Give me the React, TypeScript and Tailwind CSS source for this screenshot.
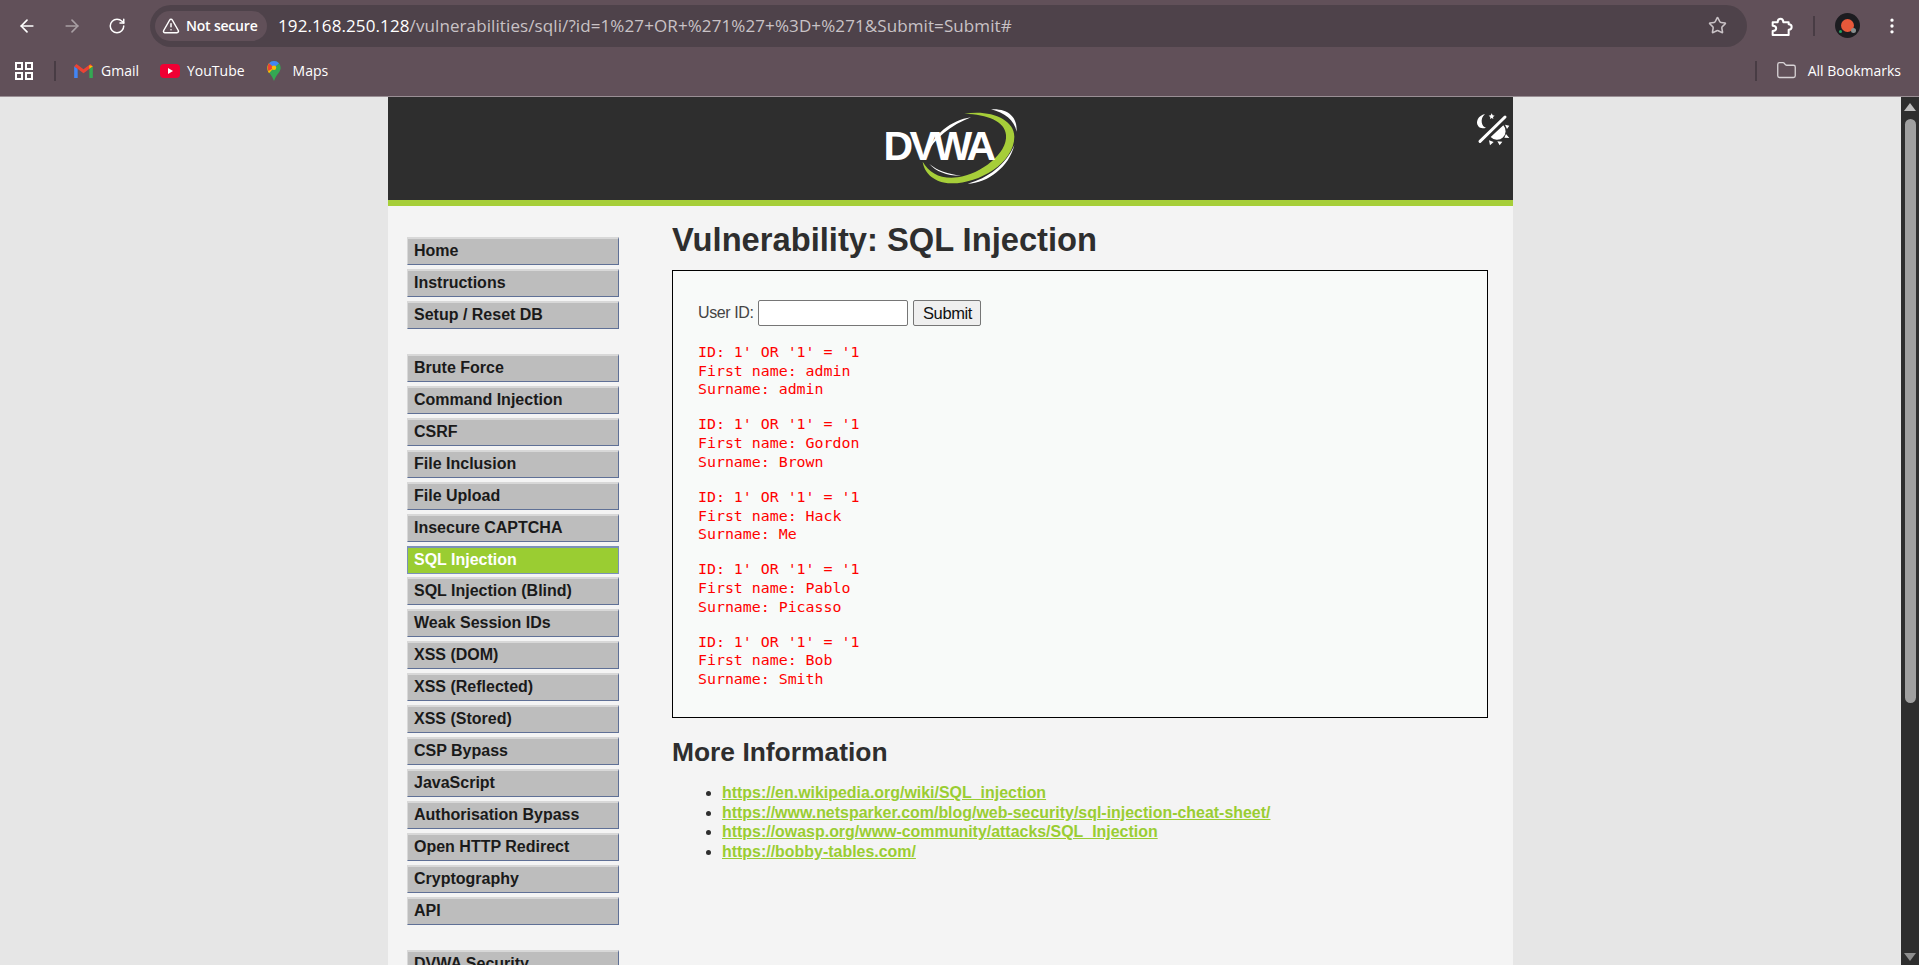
import { ArrowLeft, ArrowRight, RotateCw, TriangleAlert, Star, EllipsisVertical, Folder } from "lucide-react";

const menuGroups = [
  ["Home", "Instructions", "Setup / Reset DB"],
  ["Brute Force", "Command Injection", "CSRF", "File Inclusion", "File Upload", "Insecure CAPTCHA", "SQL Injection", "SQL Injection (Blind)", "Weak Session IDs", "XSS (DOM)", "XSS (Reflected)", "XSS (Stored)", "CSP Bypass", "JavaScript", "Authorisation Bypass", "Open HTTP Redirect", "Cryptography", "API"],
  ["DVWA Security"],
];

const results = [
  ["admin", "admin"],
  ["Gordon", "Brown"],
  ["Hack", "Me"],
  ["Pablo", "Picasso"],
  ["Bob", "Smith"],
];

const links = [
  "https://en.wikipedia.org/wiki/SQL_injection",
  "https://www.netsparker.com/blog/web-security/sql-injection-cheat-sheet/",
  "https://owasp.org/www-community/attacks/SQL_Injection",
  "https://bobby-tables.com/",
];

function Browser() {
  return (
    <div className="h-[97px] shrink-0 bg-[#615059] border-b border-[#9a8f95] font-['Open_Sans',sans-serif]">
      <div className="h-[51px] flex items-center">
        <ArrowLeft size={20} strokeWidth={2} className="ml-[17px] text-white" />
        <ArrowRight size={20} strokeWidth={2} className="ml-[25px] text-[#a89ea3]" />
        <RotateCw size={18} strokeWidth={2} className="ml-[26px] text-white" />
        <div className="ml-[24px] w-[1597px] h-[42px] rounded-full bg-[#4e424a] flex items-center pl-[5px] pr-[20px]">
          <div className="h-[30px] w-[112px] shrink-0 pl-[7px] rounded-full bg-[#615059] flex items-center gap-[6px] text-white text-[14px] font-semibold">
            <TriangleAlert size={18} />
            <span className="whitespace-nowrap tracking-[-0.2px]">Not secure</span>
          </div>
          <div className="ml-[11px] text-[17px] tracking-[0.1px] text-white whitespace-nowrap">
            192.168.250.128<span className="text-[#c9c2c6]">/vulnerabilities/sqli/?id=1%27+OR+%271%27+%3D+%271&amp;Submit=Submit#</span>
          </div>
          <Star size={19} className="ml-auto text-[#c9c2c6]" />
        </div>
        <svg viewBox="810 40 72 66" className="ml-[23px] w-[24px] h-[22px]" fill="none" stroke="#fff" strokeWidth="6" strokeLinejoin="round">
          <path d="M818 62L833 62C833 48 850 48 850 62L866 62L866 68C878 68 878 84 866 84L866 100L818 100L818 88C832 88 832 72 818 72Z" />
        </svg>
        <div className="ml-[19px] w-[2px] h-[20px] bg-[#483c44]" />
        <div className="ml-[20px] w-[25px] h-[25px] rounded-full bg-[#1c1c20] flex items-center justify-center relative">
          <div className="w-[13px] h-[13px] rounded-full bg-[#e8583a]" />
          <div className="absolute left-[4px] bottom-[5px] w-[3px] h-[3px] rounded-full bg-[#20a060]" />
          <div className="absolute right-[4px] bottom-[5px] w-[5px] h-[5px] rounded-full bg-[#8a9090]" />
        </div>
        <EllipsisVertical size={20} className="ml-[22px] text-white" />
      </div>
      <div className="h-[45px] pb-[6px] flex items-center text-[14px] text-white">
        <svg viewBox="0 0 18 18" className="ml-[15px] w-[18px] h-[18px]" fill="none" stroke="#fff" strokeWidth="2">
          <rect x="1" y="1" width="6" height="6" />
          <rect x="11" y="1" width="6" height="6" />
          <rect x="1" y="11" width="6" height="6" />
          <rect x="11" y="11" width="6" height="6" />
        </svg>
        <div className="ml-[21px] w-[2px] h-[20px] bg-[#483c44]" />
        <svg viewBox="0 0 16 12" className="ml-[18px] w-[19px] h-[14px]">
          <path d="M0 2v10h3V4z" fill="#4285f4" />
          <path d="M13 4v8h3V2z" fill="#34a853" />
          <path d="M0 2l8 6 8-6-2-2-6 4.500L2 0z" fill="#ea4335" />
          <path d="M13 1v3l3-2z" fill="#fbbc04" />
        </svg>
        <span className="ml-[8px]">Gmail</span>
        <div className="ml-[21px] w-[20px] h-[14px] rounded-[4px] bg-[#f00033] flex items-center justify-center">
          <div className="w-0 h-0 border-y-[3px] border-y-transparent border-l-[5px] border-l-white" />
        </div>
        <span className="ml-[7px]">YouTube</span>
        <svg viewBox="0 0 12 18" className="ml-[22px] w-[14px] h-[20px]">
          <path d="M6 0a6 6 0 0 1 6 6c0 4-4 6-6 12C4 12 0 10 0 6a6 6 0 0 1 6-6z" fill="#34a853" />
          <path d="M1.500 2l4.500 4-4.500 5C.5 9.500 0 8 0 6c0-1.500.6-3 1.500-4z" fill="#fbbc04" />
          <path d="M6 0a6 6 0 0 1 4.500 2L6 6 1.500 2A6 6 0 0 1 6 0z" fill="#4285f4" />
          <path d="M1.500 2L6 6 1 9C0 7 0 4 1.500 2z" fill="#ea4335" />
          <circle cx="6" cy="6" r="2" fill="#fbbc04" />
        </svg>
        <span className="ml-[12px]">Maps</span>
        <div className="ml-auto w-[2px] h-[20px] bg-[#483c44]" />
        <Folder size={21} strokeWidth={1.5} className="ml-[19px] text-[#d8d3d6]" />
        <span className="ml-[11px] mr-[18px]">All Bookmarks</span>
      </div>
    </div>
  );
}

function Logo() {
  return (
    <div className="relative w-[140px] h-[85px]">
      <svg viewBox="240 45 420 255" className="absolute inset-0 w-full h-full">
        <path d="M490 72C560 58 640 85 640 140C640 220 530 282 450 280C400 278 370 250 365 215C385 250 420 268 470 262C540 252 620 190 615 135C612 95 560 72 490 72Z" fill="#a6ce39" />
        <path d="M570 58C620 55 650 80 647 125C640 90 610 68 570 58Z" fill="#fff" />
        <path d="M640 165C625 230 560 280 500 281C560 265 615 225 640 165Z" fill="#fff" />
        <path d="M510 82C450 90 395 135 375 195C400 145 450 105 510 82Z" fill="#fff" />
        <path d="M385 222C405 245 440 258 480 257C440 252 410 242 385 222Z" fill="#fff" />
      </svg>
      <span className="absolute left-[3px] top-[21px] text-[41px] leading-[41px] font-bold text-white tracking-[-3.500px]">DVWA</span>
    </div>
  );
}

function ThemeIcon() {
  return (
    <svg viewBox="45 50 105 105" className="absolute right-[3px] top-[15px] w-[35px] h-[35px]" fill="#fff">
      <path d="M60 138L135 65" stroke="#fff" strokeWidth="9" strokeLinecap="round" />
      <path d="M75 56C55 60 45 80 55 93C60 100 70 100 78 97C65 95 58 70 75 56Z" />
      <path d="M95 54l3 6 6 1-5 4 1 6-5-3-5 3 1-6-5-4 6-1z" />
      <path d="M130 90A24 24 0 0 1 92 125Z" />
      <path d="M135 88l13 3-7 10zM138 116l10 12-15-1zM112 138l15 1-8 11zM87 135l14 5-11 10z" />
    </svg>
  );
}

export default function App() {
  return (
    <div className="h-[965px] w-[1919px] overflow-hidden flex flex-col bg-[#e6e6e6] font-['Liberation_Sans',sans-serif]">
      <Browser />
      <div className="flex flex-1 min-h-0">
        <div className="flex-1 min-w-0 overflow-hidden">
          <div className="ml-[388px] w-[1125px] h-full overflow-hidden bg-[#f4f4f4]">
            <div className="relative h-[109px] bg-[#2e2e2e] border-b-[6px] border-[#a6ce39] flex justify-center pt-[8px]">
              <Logo />
              <ThemeIcon />
            </div>
            <div className="flex pl-[19px]">
              <nav className="w-[212px] shrink-0 pt-[31px] text-[16px] font-bold text-[#1a1a1a]">
                {menuGroups.map((group, i) => (
                  <ul key={i} className="mb-[25px]">
                    {group.map((item) => (
                      <li
                        key={item}
                        className={`h-[28px] mb-[3.950px] pl-[6px] leading-[23px] border-t-2 border-b border-r border-l whitespace-nowrap ${item === "SQL Injection" ? "bg-[#9acd32] text-white border-[#7a90b8]" : "bg-[#bdbdbd] border-t-[#d8d8d8] border-l-[#d8d8d8] border-b-[#5f7096] border-r-[#5f7096]"}`}
                      >
                        {item}
                      </li>
                    ))}
                  </ul>
                ))}
              </nav>
              <main className="ml-[53px] w-[816px] text-[#2e2e2e]">
                <h1 className="text-[32.700px] leading-[40px] font-bold mt-[14px] mb-[10px]">Vulnerability: SQL Injection</h1>
                <div className="h-[448px] border border-black bg-[#f8faf9] pl-[25px] pt-[29px]">
                  <div className="flex items-center h-[26px] text-[16px] tracking-[-0.4px] text-[#444]">
                    <span>User ID:</span>
                    <input type="text" className="ml-[5px] w-[150px] h-[26px] bg-white border border-[#767676] rounded-[2px]" />
                    <button className="ml-[5px] w-[68px] h-[26px] bg-[#efefef] border border-[#767676] rounded-[2px] text-[16.500px] text-[#111]">Submit</button>
                  </div>
                  <div className="mt-[17px] text-[#ff0000] text-[14.900px] leading-[18.700px]">
                    {results.map(([first, last], i) => (
                      <pre key={i} className="mb-[16.300px] font-['DejaVu_Sans_Mono',monospace]">
                        {`ID: 1' OR '1' = '1\nFirst name: ${first}\nSurname: ${last}`}
                      </pre>
                    ))}
                  </div>
                </div>
                <h2 className="text-[26.400px] leading-[32px] font-bold mt-[18px] mb-[15px]">More Information</h2>
                <ul className="list-disc pl-[50px] text-[15.950px] leading-[19.700px] font-bold">
                  {links.map((l) => (
                    <li key={l}>
                      <a href="#" className="text-[#9acd32] underline">{l}</a>
                    </li>
                  ))}
                </ul>
              </main>
            </div>
          </div>
        </div>
        <div className="w-[18px] shrink-0 bg-[#2e2e2e] flex flex-col items-center pt-[6px] pb-[4px]">
          <div className="w-0 h-0 border-x-[6px] border-x-transparent border-b-[8px] border-b-[#bdbdbd]" />
          <div className="mt-[8px] w-[11px] h-[584px] rounded-full bg-[#a0a0a0]" />
          <div className="mt-auto w-0 h-0 border-x-[6px] border-x-transparent border-t-[8px] border-t-[#8f8f8f]" />
        </div>
      </div>
    </div>
  );
}
